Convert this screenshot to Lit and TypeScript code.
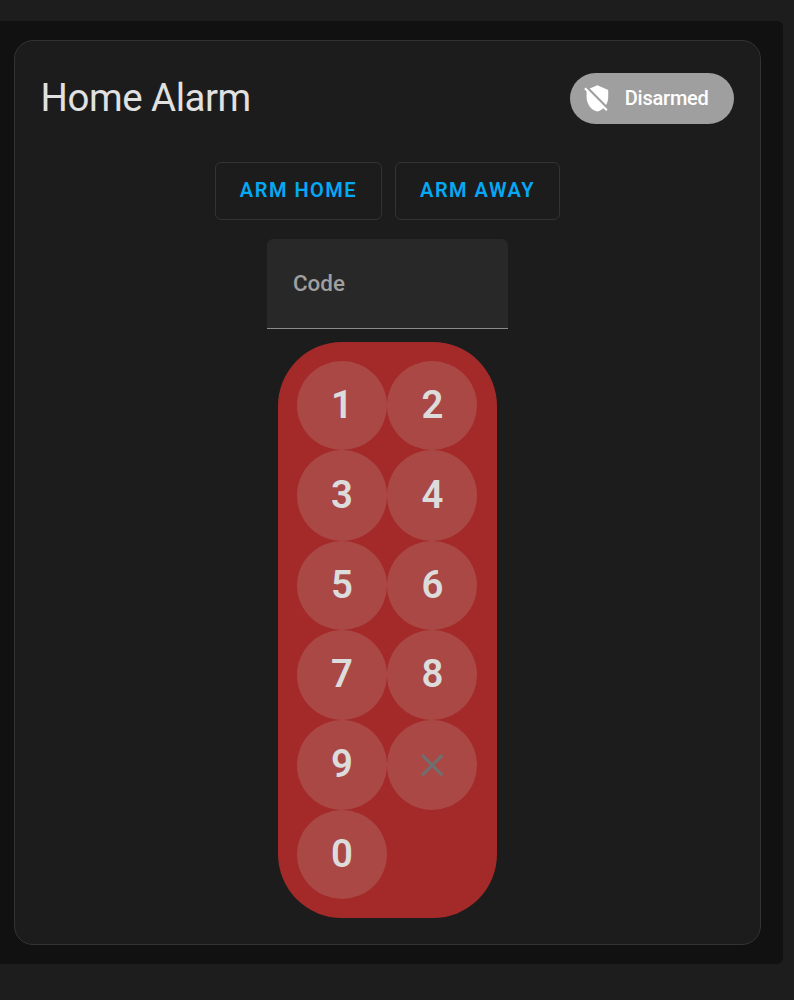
import { LitElement, html, css } from 'lit';
import { customElement, property, state } from 'lit/decorators.js';

const mdiShieldOff =
    'M1,4.27L2.28,3L20.5,21.22L19.23,22.5L17,20.25C15.57,21.57 13.87,22.54 12,23C6.84,21.74 3,16.55 3,11V6.27L1,4.27M12,1L21,5V11C21,13.28 20.35,15.5 19.23,17.41L5.65,3.82L12,1Z';
const mdiClose =
    'M19,6.41L17.59,5L12,10.59L6.41,5L5,6.41L10.59,12L5,17.59L6.41,19L12,13.41L17.59,19L19,17.59L13.41,12L19,6.41Z';

const KEYS = ['1', '2', '3', '4', '5', '6', '7', '8', '9', 'clear', '0'];

@customElement('alarm-keypad')
export class AlarmKeypad extends LitElement {
    static styles = css`
        :host {
            display: grid;
            grid-template-columns: 90px 90px;
            grid-template-rows: 89px 91px 89px 90px 90px 89px;
            padding: 19px 20px 19px 19px;
            box-sizing: border-box;
            width: 219px;
            height: 576px;
            border-radius: 64px;
            background: #a42a2a;
        }

        .key {
            display: flex;
            align-items: center;
            justify-content: center;
            padding: 0 0 2px;
            border: none;
            border-radius: 50%;
            background: #aa4846;
            color: #dcdcdc;
            font: 600 38.4px Roboto, sans-serif;
        }

        .key:nth-of-type(even) {
            padding-left: 1px;
        }

        .key:nth-of-type(n + 7):nth-of-type(-n + 9) {
            padding-bottom: 3px;
        }

        .key.clear {
            padding: 0;
            color: #6f6f6f;
        }

        svg {
            width: 38.4px;
            height: 38.4px;
            fill: currentColor;
        }
    `;

    _onKeyClick(key: string) {
        this.dispatchEvent(
            new CustomEvent('alarm-key', {
                detail: { key },
                bubbles: true,
                composed: true,
            })
        );
    }

    render() {
        return KEYS.map((key) =>
            key === 'clear'
                ? html`<button
                      class="key clear"
                      aria-label="Clear"
                      @click=${() => this._onKeyClick(key)}
                  >
                      <svg viewBox="0 0 24 24"><path d=${mdiClose}></path></svg>
                  </button>`
                : html`<button
                      class="key"
                      @click=${() => this._onKeyClick(key)}
                  >
                      ${key}
                  </button>`
        );
    }
}

@customElement('alarm-chip')
export class AlarmChip extends LitElement {
    static styles = css`
        :host {
            display: flex;
            align-items: center;
            box-sizing: border-box;
            width: 164px;
            height: 51px;
            padding: 0 0 1px 13px;
            gap: 13px;
            border-radius: 26px;
            background: #9f9f9f;
            color: #fff;
            font: 460 20px Roboto, sans-serif;
            letter-spacing: -0.24px;
        }

        svg {
            width: 28.8px;
            height: 28.8px;
            fill: currentColor;
        }
    `;

    @property() label = '';

    render() {
        return html`
            <svg viewBox="0 0 24 24"><path d=${mdiShieldOff}></path></svg>
            <span>${this.label}</span>
        `;
    }
}

@customElement('app-root')
export class AppRoot extends LitElement {
    static styles = css`
        :host {
            display: block;
            box-sizing: border-box;
            height: 1000px;
            padding: 21px 11px 36px 0;
            background: #1d1d1d;
            font-family: Roboto, sans-serif;
        }

        .view {
            box-sizing: border-box;
            height: 943px;
            padding: 19px 22px 19px 14px;
            border-radius: 0 6px 6px 0;
            background: #111;
        }

        .card {
            display: flex;
            flex-direction: column;
            align-items: center;
            box-sizing: border-box;
            height: 905px;
            border: 1px solid #333;
            border-radius: 19px;
            background: #1c1c1c;
        }

        .header {
            display: flex;
            align-items: center;
            justify-content: space-between;
            align-self: stretch;
            height: 51px;
            padding: 32px 26px 38px 25.6px;
        }

        .title {
            margin: 0 0 2px;
            color: #e1e1e1;
            font-size: 38.4px;
            font-weight: 400;
            line-height: 51px;
            letter-spacing: -0.46px;
        }

        .actions {
            display: flex;
            gap: 13px;
            margin-bottom: 19px;
        }

        .action {
            box-sizing: border-box;
            width: 167px;
            height: 58px;
            padding: 0 0 2px;
            border: 1px solid #333;
            border-radius: 6px;
            background: none;
            color: #03a9f4;
            font: 560 20px Roboto, sans-serif;
            letter-spacing: 1.5px;
        }

        .away {
            width: 165px;
        }

        .code {
            box-sizing: border-box;
            width: 241px;
            height: 90px;
            margin-bottom: 13px;
            padding: 0 26px 2px;
            border: none;
            border-bottom: 1px solid #8a8a8a;
            border-radius: 6px 6px 0 0;
            outline: none;
            background: #282828;
            color: #e1e1e1;
            font: 480 22.4px Roboto, sans-serif;
        }

        .code::placeholder {
            color: #a0a0a0;
            opacity: 1;
        }
    `;

    @state() private _code = '';

    _onKey(e: CustomEvent) {
        const { key } = e.detail;
        this._code = key === 'clear' ? '' : this._code + key;
    }

    render() {
        return html`
            <div class="view">
                <div class="card">
                    <div class="header">
                        <h1 class="title">Home Alarm</h1>
                        <alarm-chip label="Disarmed"></alarm-chip>
                    </div>
                    <div class="actions">
                        <button class="action">ARM HOME</button>
                        <button class="action away">ARM AWAY</button>
                    </div>
                    <input class="code" placeholder="Code" .value=${this._code} />
                    <alarm-keypad @alarm-key=${this._onKey}></alarm-keypad>
                </div>
            </div>
        `;
    }
}
